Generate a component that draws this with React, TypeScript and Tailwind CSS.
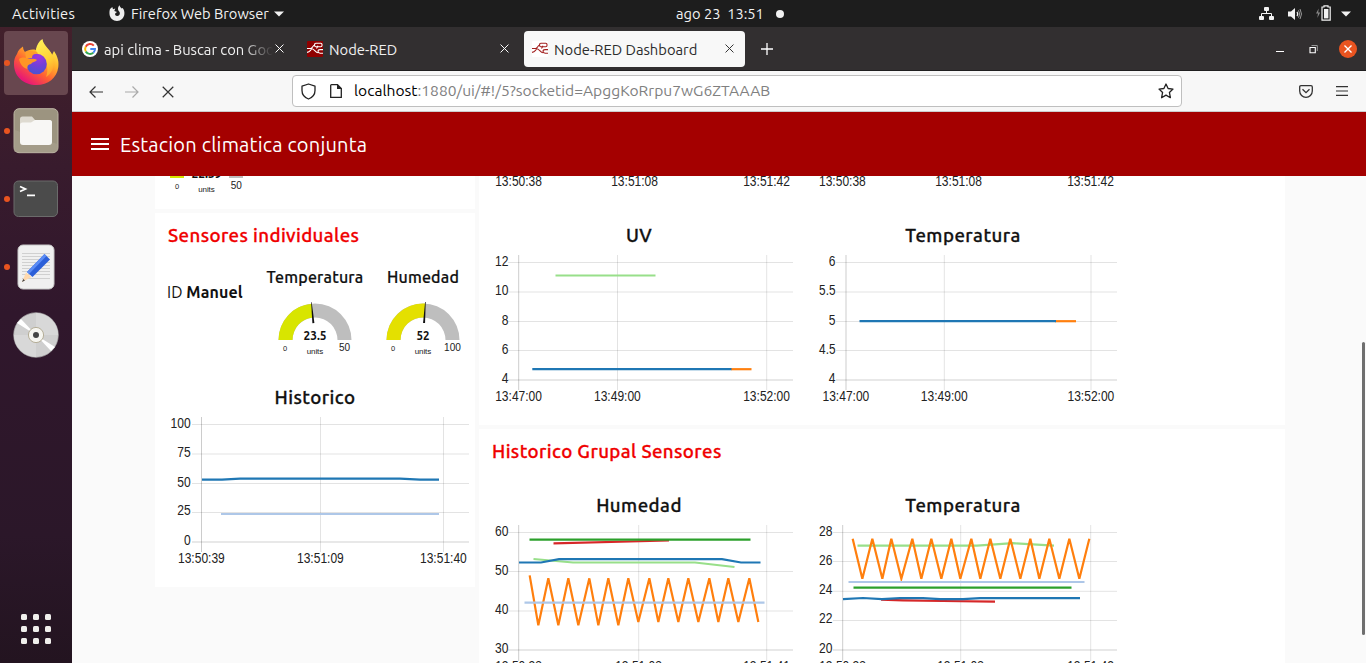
import React from 'react';

type Pt = [number, number];
type Series = { color: string; points: Pt[] };
type Tick = { at: number; label: string; base?: number };

const BLUE = '#1f77b4';
const LIGHT_BLUE = '#aec7e8';
const ORANGE = '#ff7f0e';
const LIGHT_GREEN = '#98df8a';
const GREEN = '#2ca02c';
const RED = '#d62728';

interface ChartProps {
  x: number;
  y: number;
  h: number;
  top?: number;
  bottom?: number;
  left?: number;
  labelRight?: number;
  xBase: number;
  yTicks: Tick[];
  xTicks: Tick[];
  series: Series[];
}

function Chart({ x, y, h, top = 0, bottom = 0, left = 0, labelRight = 0, xBase, yTicks, xTicks, series }: ChartProps) {
  return (
    <svg
      className="block w-[308px] shrink-0 [font-family:'Liberation_Sans',sans-serif] text-[14.2px]"
      height={h}
      viewBox={`${x} ${y} 308 ${h}`}
    >
      {yTicks.map((t, i) => (
        <g key={t.label}>
          <line x1={left} x2={x + 308} y1={t.at} y2={t.at} stroke="#000" strokeOpacity={i === yTicks.length - 1 ? 0.18 : 0.11} />
          <text x={labelRight} y={t.base} textAnchor="end" fill="#222" textLength={t.label.replace('.', '').length * 6.7 + (t.label.includes('.') ? 3 : 0)} lengthAdjust="spacingAndGlyphs">
            {t.label}
          </text>
        </g>
      ))}
      {xTicks.map((t, i) => (
        <g key={t.label}>
          {bottom > 0 && <line x1={t.at} x2={t.at} y1={top} y2={bottom} stroke="#000" strokeOpacity={i === 0 ? 0.2 : 0.11} />}
          <text x={t.at - 23.5} y={xBase} fill="#222" textLength={46.8} lengthAdjust="spacingAndGlyphs">
            {t.label}
          </text>
        </g>
      ))}
      {series.map((s, i) => (
        <polyline key={i} points={s.points.map((p) => p.join(',')).join(' ')} fill="none" stroke={s.color} strokeWidth={2.2} />
      ))}
    </svg>
  );
}

const zigzag = (ox: number, oy: number, xs: number[], ys: (i: number) => number): Pt[] =>
  xs.map((v, i) => [ox + v / 3, oy + ys(i) / 3] as Pt);

const humidityZig = zigzag(
  470, 420,
  [179, 205, 235, 265, 295, 325, 358, 385, 415, 445, 475, 505, 538, 565, 595, 625, 655, 685, 718, 745, 775, 805, 838, 865],
  (i) => (i === 0 ? 466 : i % 2 === 0 ? 475 : i < 10 ? 616 : 606),
);
const temperatureZig = zigzag(
  800, 420,
  [158, 187, 217, 247, 274, 304, 337, 364, 394, 424, 454, 481, 514, 541, 571, 601, 631, 661, 691, 718, 748, 778, 808, 838, 868],
  (i) => (i % 2 === 0 ? 356 : 476),
);

function ChartTitle({ children }: { children: React.ReactNode }) {
  return (
    <h3 className="flex h-[26px] w-[308px] shrink-0 items-center justify-center pt-[2px] text-[18.7px] font-medium tracking-[0.45px] text-[#111] [-webkit-text-stroke:0.3px_#111]">
      {children}
    </h3>
  );
}

function GroupTitle({ children }: { children: React.ReactNode }) {
  return (
    <h2 className="flex h-[44px] items-center whitespace-nowrap pl-[7px] pt-[2px] text-[18.7px] font-medium tracking-[0.4px] text-[#f00000] [-webkit-text-stroke:0.3px_#f00000]">
      {children}
    </h2>
  );
}

function Gauge({ value, max, fill, needle }: { value: string; max: string; fill: string; needle: number }) {
  const a = Math.PI * (1 - needle);
  const p = (r: number, off = 0) =>
    `${(40 + r * Math.cos(a) + off * Math.sin(a)).toFixed(2)} ${(38 - r * Math.sin(a) + off * Math.cos(a)).toFixed(2)}`;
  return (
    <svg width="84" height="56" viewBox="0 0 84 56" className="block shrink-0">
      <path d="M3.5 38A36.5 36.5 0 0 1 76.5 38H62.5A22.5 22.5 0 0 0 17.5 38Z" fill="#bebebe" />
      <path d={`M3.5 38A36.5 36.5 0 0 1 ${p(36.5)}L${p(22.5)}A22.5 22.5 0 0 0 17.5 38Z`} fill={fill} />
      <path d={`M${p(38, -0.3)}L${p(38, 0.3)}L${p(17, 1)}L${p(17, -1)}Z`} fill="#111" />
      <text x="40" y="38" textAnchor="middle" className="text-[12px] font-bold" fill="#111" textLength={value.length > 2 ? 23 : 13} lengthAdjust="spacingAndGlyphs">{value}</text>
      <g className="[font-family:'Liberation_Sans',sans-serif]" fill="#222">
        <text x="10" y="49" textAnchor="middle" className="text-[7.5px]">0</text>
        <text x="40" y="52" textAnchor="middle" className="text-[8px]" textLength="16.5">units</text>
        <text x="69.5" y="49" textAnchor="middle" className="text-[11px]" textLength={max.length * 5.6} lengthAdjust="spacingAndGlyphs">{max}</text>
      </g>
    </svg>
  );
}

function NodeRedIcon({ bg, fg }: { bg: string; fg: string }) {
  return (
    <svg width="16" height="16" viewBox="0 0 16 16" className="shrink-0">
      <rect width="16" height="16" rx="1" fill={bg} />
      <g fill="none" stroke={fg} strokeWidth="1.1">
        <path d="M0 7.500H3.500C6 7.500 5.500 4 8 4M1 7.500H3.800C8 7.500 8 11.700 11 11.700M0 11.400C3 11 3 9.500 4.800 7.900" />
        <rect x="7.600" y="2.300" width="7.400" height="3.500" rx="1.200" />
        <path d="M11 4.800 9.500 7.500M16 8.600H13.200Q11 8.600 11 10.300T13.200 12.200H16" />
      </g>
    </svg>
  );
}

function CloseX({ size = 9, color = '#fff', sw = 1.1 }: { size?: number; color?: string; sw?: number }) {
  return (
    <svg width={size} height={size} viewBox="0 0 10 10" className="shrink-0">
      <path d="M.6.6 9.4 9.4M9.4.6.6 9.4" stroke={color} strokeWidth={sw} fill="none" />
    </svg>
  );
}

function TopBar() {
  return (
    <header className="grid h-[27px] shrink-0 grid-cols-[676px_1fr_auto] items-center bg-[#1d1d1d] text-[14.67px] text-[#f2f2f2]">
      <div className="flex items-center pl-3">
        <span className="w-[97px] whitespace-nowrap tracking-[0.3px]">Activities</span>
        <svg width="16" height="17" viewBox="0 0 16 17" className="shrink-0">
          <path d="M1 4 3.3 2 4 4.2 6.3 3.4 5.3 6 8 7 6.4 8.2C5.5 9 6.4 11 8.2 11 10 11 11.2 9.5 10.8 7.8 10.5 6.4 9 5.8 9 4 9 2.4 9.6 1.3 10.5.3 10.8 2 12 2.6 12.6 3.6L13.6 3C15 4.7 15.6 6.5 15.4 9 15 13 12 16 8 16 4 16 .8 13 .5 9 .4 7 .5 5.5 1 4Z" fill="#ededed" />
        </svg>
        <span className="ml-[6px] w-[138px] whitespace-nowrap">Firefox Web Browser</span>
        <svg width="10" height="6" viewBox="0 0 10 6" className="ml-[5px]"><path d="M0 .5H10L5 5.5Z" fill="#f2f2f2" /></svg>
      </div>
      <div className="flex items-center">
        <span className="w-[88px] whitespace-pre">ago 23  13:51</span>
        <span className="ml-[12px] size-2 rounded-full bg-[#f2f2f2]" />
      </div>
      <div className="flex items-center pr-[15px]">
        <svg width="16" height="14" viewBox="0 0 16 14" fill="#f2f2f2">
          <rect x="5" y="0" width="5" height="4" rx="1" /><rect x="0" y="9" width="5" height="4" rx="1" /><rect x="10" y="9" width="5" height="4" rx="1" />
          <path d="M7.5 4V6.5M2.5 9V6.5H12.5V9" stroke="#f2f2f2" fill="none" />
        </svg>
        <svg width="16" height="14" viewBox="0 0 16 14" className="ml-[13px]">
          <path d="M0 4.5H3L7 1V13L3 9.5H0Z" fill="#f2f2f2" />
          <path d="M9 5Q10.5 7 9 9" stroke="#f2f2f2" strokeWidth="1.3" fill="none" /><path d="M10.5 3.3Q13 7 10.5 10.7M12 2Q15 7 12 12" stroke="#999" fill="none" />
        </svg>
        <svg width="16" height="16" viewBox="0 0 16 16" className="ml-[12px] -mt-px">
          <path d="M2.7 3.5 0 8.5H2L1.3 13 4.2 7.5H2.2Z" fill="#888" />
          <path d="M6 2H8V.8H12V2H14.2V15.2H6Z" fill="none" stroke="#f2f2f2" strokeWidth="1.2" /><rect x="8" y="4" width="4.4" height="9.4" fill="#f2f2f2" />
        </svg>
        <svg width="10" height="6" viewBox="0 0 10 6" className="ml-[9px]"><path d="M0 .5H10L5 5.5Z" fill="#f2f2f2" /></svg>
      </div>
    </header>
  );
}

function FirefoxLogo() {
  return (
    <svg width="48" height="48" viewBox="0 0 48 48">
      <defs>
        <linearGradient id="fxBody" x1=".85" y1=".1" x2=".25" y2=".95">
          <stop offset="0" stopColor="#fff44f" /><stop offset=".35" stopColor="#ffb02a" /><stop offset=".65" stopColor="#ff5e33" /><stop offset="1" stopColor="#e5127c" />
        </linearGradient>
        <linearGradient id="fxFlame" x1=".4" y1="0" x2=".7" y2="1">
          <stop offset="0" stopColor="#fff056" /><stop offset=".6" stopColor="#ffcf35" /><stop offset="1" stopColor="#ff9a2b" />
        </linearGradient>
        <radialGradient id="fxGlobe" cx=".6" cy=".15" r=".9">
          <stop offset="0" stopColor="#a236df" /><stop offset=".5" stopColor="#7240d8" /><stop offset="1" stopColor="#4455d0" />
        </radialGradient>
      </defs>
      <path d="M5 15C6 11 9 9 11 7.5 11 10 12 12 13 13 16 11 20 10 24 11L30 1C31 8 38 10 40 16L42 12C46 18 47 23 46.300 28 45 39 36 46 24.500 46 12 46 2.500 38 2 26 1.700 21 3 18 5 15Z" fill="url(#fxBody)" />
      <path d="M24 10C25 6 27 2 30.500 0 31 7 40 11 41.500 20 43 29 39 35 34 38 37 31 35 23 31 19 28 16 24 14 24 10Z" fill="url(#fxFlame)" />
      <circle cx="24.500" cy="25" r="10.300" fill="url(#fxGlobe)" />
      <path d="M7 20C11 17 15 19 17 19.500 20 20 23 19 25 21 23.500 23 20 23 19 25 16 25.500 15 27 15.500 30 11 29 8 25 7 20Z" fill="#ff9526" />
      <path d="M13 13C18 11 23 12 26 14 22 14 20 16 20 19L14 19Z" fill="#ff9d2b" />
    </svg>
  );
}

function DockItem({ active, running, children }: { active?: boolean; running?: boolean; children: React.ReactNode }) {
  return (
    <div className="flex h-16 w-[72px] items-center">
      <span className={`ml-1 size-[6px] -mr-[6px] rounded-full ${running ? 'z-10 bg-[#e95420]' : ''}`} />
      <div className={`flex size-16 items-center justify-center rounded-[4px] ${active ? 'bg-[#68474f]' : ''}`}>{children}</div>
    </div>
  );
}

function Dock() {
  return (
    <aside className="flex w-[72px] shrink-0 flex-col gap-1 bg-[linear-gradient(180deg,#42202b_0%,#381b2d_22%,#30172c_45%,#2b1729_80%,#231420_100%)] pt-1">
      <DockItem active running><FirefoxLogo /></DockItem>
      <DockItem running>
        <svg width="46" height="46" viewBox="0 0 46 46">
          <rect x="1" y=".7" width="44" height="44" rx="5" fill="#9c9480" stroke="#bdb6a4" />
          <path d="M1.500 44V22L44.500 36V40Q44.500 44 41 44Z" fill="#aaa28f" opacity=".6" />
          <path d="M7 11Q7 8.500 9.500 8.500H19L22 12H36Q39 12 39 15V22H7Z" fill="#dedad0" />
          <path d="M7 17Q7 14.500 9.500 14.500H18L22 12H36.500Q39 12 39 14.500V34Q39 37 36 37H10Q7 37 7 34Z" fill="#f8f7f5" />
        </svg>
      </DockItem>
      <DockItem running>
        <svg width="46" height="38" viewBox="0 0 46 38">
          <rect x="1" y="1" width="43.500" height="35.500" rx="4.500" fill="#4b4b4b" stroke="#6b6b6b" />
          <path d="M7 6.500 12.500 9 7 11.500M14 15.300H22" stroke="#fff" strokeWidth="1.700" fill="none" />
        </svg>
      </DockItem>
      <DockItem running>
        <svg width="38" height="46" viewBox="0 0 38 46">
          <rect x="1" y="1" width="36" height="44" rx="5" fill="#f0f0f0" stroke="#c8c8c8" />
          <path d="M5 9.500H33M5 12.500H33M5 15.500H33M5 18.500H33M5 21.500H33M5 24.500H33M5 27.500H33M5 30.500H33M5 34.500H33" stroke="#d0d0d0" />
          <path d="M5 38 9 28.500 14.500 33Z" fill="#ffd9ae" /><path d="M5 38 6.200 35 8 36.500Z" fill="#444" />
          <path d="M10 28 27.500 10 33 15.500 15.500 33Z" fill="#2b5fd9" /><path d="M10 28 27.500 10 29.500 12 12 30Z" fill="#5b8cf5" />
        </svg>
      </DockItem>
      <DockItem>
        <svg width="46" height="46" viewBox="0 0 46 46">
          <circle cx="23" cy="23" r="22.300" fill="#cfcfcf" stroke="#aaa" strokeWidth=".7" />
          <path d="M23 23V1A22 22 0 0 1 45 23ZM23 23V45A22 22 0 0 1 1 23Z" fill="#d8d8d8" />
          <path d="M23 23 4 11 8 7ZM23 23 42 35 38 39Z" fill="#fff" />
          <circle cx="23" cy="23" r="7.600" fill="#f6f5f0" stroke="#b5ae98" /><circle cx="23" cy="23" r="3" fill="#444" />
        </svg>
      </DockItem>
      <div className="mt-auto mb-[19px] ml-[21px] grid w-[30px] grid-cols-3 gap-[6px]">
        {Array.from({ length: 9 }, (_, i) => <span key={i} className="size-[6px] rounded-[1.5px] bg-[#f0efec]" />)}
      </div>
    </aside>
  );
}

function TabStrip() {
  return (
    <div className="flex h-[44px] shrink-0 items-center border-b border-[#1f1e1f] bg-[#322f30] text-[14.75px] text-[#f0f0f0]">
      <div className="flex h-9 w-[226px] items-center pl-[10px]">
        <svg width="16" height="16" viewBox="0 0 16 16" className="shrink-0">
          <circle cx="8" cy="8" r="8" fill="#fff" />
          <g fill="none" strokeWidth="2"><path d="M11.800 4.700A5 5 0 0 0 3.700 5.700" stroke="#ea4335" /><path d="M3.700 5.700A5 5 0 0 0 3.800 10.600" stroke="#fbbc05" /><path d="M3.800 10.600A5 5 0 0 0 11.300 11.700" stroke="#34a853" /><path d="M11.300 11.700A5 5 0 0 0 13 8H8.300" stroke="#4285f4" /></g>
        </svg>
        <span className="ml-[6px] w-[169px] overflow-hidden whitespace-nowrap pt-[3px] [mask-image:linear-gradient(90deg,#000_82%,transparent_100%)]">api clima - Buscar con Google</span>
        <span className="ml-[2px] flex"><CloseX /></span>
      </div>
      <div className="flex h-9 w-[226px] items-center pl-[9px] pr-[15px]">
        <NodeRedIcon bg="#8f0000" fg="#fff" />
        <span className="ml-[6px] flex-1 whitespace-nowrap pt-[3px]">Node-RED</span>
        <CloseX />
      </div>
      <div className="flex h-9 w-[221px] items-center rounded-[4px] bg-[#f8f8f8] pl-2 pr-[11px] text-[#2c2c2c]">
        <NodeRedIcon bg="#fff" fg="#a32020" />
        <span className="ml-[6px] flex-1 whitespace-nowrap pt-[3px]">Node-RED Dashboard</span>
        <CloseX color="#333" />
      </div>
      <svg width="12" height="12" viewBox="0 0 12 12" className="mt-px ml-4"><path d="M6 0V12M0 6H12" stroke="#fff" strokeWidth="1.300" /></svg>
      <div className="ml-auto flex items-center pr-[9px]">
        <span className="mt-[5px] h-px w-2 bg-white" />
        <svg width="9" height="9" viewBox="0 0 9 9" className="ml-[25px] mr-px mt-px"><path d="M1 2.500H6.300V7.800H1Z" stroke="#fff" strokeWidth="1.100" fill="none" /><path d="M2.500.5H8.300V6" stroke="#999" fill="none" /></svg>
        <span className="ml-5 flex size-[18px] items-center justify-center rounded-full bg-[#e95420]"><CloseX size={8} sw={1.7} /></span>
      </div>
    </div>
  );
}

function Toolbar() {
  return (
    <div className="flex h-[41px] shrink-0 items-center border-b border-[#ccc] bg-[#f7f7f7]">
      <div className="flex w-[220px] items-center pl-[17px] pt-px">
        <svg width="14" height="12" viewBox="0 0 14 12"><path d="M14 6H1M6.500.5 1 6 6.500 11.500" stroke="#333" strokeWidth="1.200" fill="none" /></svg>
        <svg width="14" height="12" viewBox="0 0 14 12" className="ml-[22px]"><path d="M0 6H13M7.500.5 13 6 7.500 11.500" stroke="#aaa" strokeWidth="1.200" fill="none" /></svg>
        <span className="ml-[23px] flex"><CloseX size={12} color="#333" sw={1} /></span>
      </div>
      <div className="flex h-8 w-[890px] items-center rounded-[4px] border border-[#bfbfbf] bg-white pl-2 pr-[7px] text-[15.6px]">
        <svg width="15" height="17" viewBox="0 0 15 17" className="shrink-0"><path d="M7.500 1 14 3.200V7.500C14 11 11.500 14.500 7.500 16 3.500 14.500 1 11 1 7.500V3.200Z" stroke="#222" strokeWidth="1.300" fill="none" strokeLinejoin="round" /></svg>
        <svg width="12" height="14" viewBox="0 0 12 14" className="ml-[14px] shrink-0"><path d="M.7 1.500Q.7.700 1.500.700H7.500L11.300 4.500V13.300H.7Z" stroke="#222" strokeWidth="1.300" fill="none" /><path d="M7 0V5H12Z" fill="#222" /></svg>
        <span className="ml-3 whitespace-nowrap text-[#808080]"><span className="text-black">localhost</span>:1880/ui/#!/5?socketid=ApggKoRrpu7wG6ZTAAAB</span>
        <svg width="16" height="16" viewBox="0 0 16 16" className="ml-auto"><path d="M8 1 10.100 5.500 15 6.100 11.400 9.400 12.400 14.700 8 12.100 3.600 14.700 4.600 9.400 1 6.100 5.900 5.500Z" stroke="#222" strokeWidth="1.300" fill="none" strokeLinejoin="round" /></svg>
      </div>
      <svg width="14" height="13" viewBox="0 0 14 13" className="ml-[117px]"><path d="M2 .7H12Q13.300.7 13.300 2V6A6.300 6.300 0 0 1 .7 6V2Q.7.700 2 .7ZM3.500 4.300 7 7.700 10.500 4.300" stroke="#333" strokeWidth="1.300" fill="none" /></svg>
      <svg width="12" height="10" viewBox="0 0 12 10" className="ml-[23px]"><path d="M0 .7H12M0 5H12M0 9.300H12" stroke="#333" strokeWidth="1.200" /></svg>
    </div>
  );
}

function Dashboard() {
  const seconds = (a: number, b: number, c: number): Tick[] => [{ at: a, label: '13:50:38' }, { at: b, label: '13:51:08' }, { at: c, label: '13:51:42' }];
  const minutes = (a: number, b: number, c: number): Tick[] => [{ at: a, label: '13:47:00' }, { at: b, label: '13:49:00' }, { at: c, label: '13:52:00' }];
  const rows = (labels: string[]): Tick[] =>
    labels.map((label, i) => ({ label, at: [262.5, 292, 321.5, 350.5, 380][i], base: [266, 295, 325, 353.5, 383][i] }));
  return (
    <main className="relative flex h-[487px] gap-1 overflow-hidden bg-[#fafafa] pl-[83px]">
      <div className="flex w-[320px] shrink-0 flex-col gap-1">
        <section className="h-[33px] bg-white">
          <svg width="320" height="33" viewBox="155 176 320 33" className="block">
            <rect x="170" y="176" width="14" height="2" fill="#d6e400" /><rect x="229" y="176" width="14" height="2" fill="#bebebe" />
            <text x="206.500" y="178" textAnchor="middle" className="text-[12px] font-bold" textLength="30" lengthAdjust="spacingAndGlyphs" fill="#111">22.39</text>
            <g className="[font-family:'Liberation_Sans',sans-serif]" fill="#222">
              <text x="177" y="189" textAnchor="middle" className="text-[7.5px]">0</text>
              <text x="206.500" y="192" textAnchor="middle" className="text-[8px]" textLength="16.5">units</text>
              <text x="236.300" y="189" textAnchor="middle" className="text-[11px]" textLength="11.2" lengthAdjust="spacingAndGlyphs">50</text>
            </g>
          </svg>
        </section>
        <section className="flex h-[374px] flex-col bg-white pl-[6px]">
          <GroupTitle>Sensores individuales</GroupTitle>
          <div className="flex h-[127px]">
            <p className="w-[100px] shrink-0 whitespace-nowrap pl-[6px] pt-[23px] text-[16px] tracking-[0.1px] text-[#111]">ID <b>Manuel</b></p>
            <div className="flex w-[108px] shrink-0 flex-col items-center pt-[8px]">
              <h4 className="flex h-6 items-center text-[16px] font-medium tracking-[0.2px] text-[#111] [-webkit-text-stroke:0.2px_#111]">Temperatura</h4>
              <div className="mt-[13px] ml-[3px]"><Gauge value="23.5" max="50" fill="#d8e500" needle={0.47} /></div>
            </div>
            <div className="flex w-[108px] shrink-0 flex-col items-center pt-[8px]">
              <h4 className="flex h-6 items-center text-[16px] font-medium tracking-[0.2px] text-[#111] [-webkit-text-stroke:0.2px_#111]">Humedad</h4>
              <div className="mt-[13px] ml-[3px]"><Gauge value="52" max="100" fill="#e4e000" needle={0.52} /></div>
            </div>
          </div>
          <ChartTitle>Historico</ChartTitle>
          <Chart
            x={161} y={410} h={177} top={417} bottom={552} left={192} labelRight={190.7} xBase={563}
            yTicks={[{ at: 424.5, label: '100', base: 427.5 }, { at: 454, label: '75', base: 457 }, { at: 483.5, label: '50', base: 486.5 }, { at: 512.5, label: '25', base: 515 }, { at: 542, label: '0', base: 545 }]}
            xTicks={[{ at: 201.5, label: '13:50:39' }, { at: 320.5, label: '13:51:09' }, { at: 443.5, label: '13:51:40' }]}
            series={[
              { color: LIGHT_BLUE, points: [[221, 514], [439, 514]] },
              { color: BLUE, points: [[202, 479.7], [222, 479.7], [240, 478.6], [400, 478.6], [420, 479.7], [439, 479.7]] },
            ]}
          />
        </section>
      </div>
      <div className="flex w-[806px] shrink-0 flex-col gap-1">
        <section className="h-[249px] bg-white pl-[6px]">
          <div className="flex gap-4">
            <Chart x={485} y={176} h={46} xBase={185.5} yTicks={[]} xTicks={seconds(518.7, 634.7, 766.7)} series={[]} />
            <Chart x={809} y={176} h={46} xBase={185.5} yTicks={[]} xTicks={seconds(842.5, 958.7, 1090.7)} series={[]} />
          </div>
          <div className="flex gap-4">
            <ChartTitle>UV</ChartTitle>
            <ChartTitle>Temperatura</ChartTitle>
          </div>
          <div className="flex gap-4">
            <Chart
              x={485} y={248} h={177} top={255} bottom={390} left={508} labelRight={508.5} xBase={401}
              yTicks={rows(['12', '10', '8', '6', '4'])} xTicks={minutes(518.7, 617.5, 766.7)}
              series={[
                { color: LIGHT_GREEN, points: [[555.5, 275.5], [655.5, 275.5]] },
                { color: ORANGE, points: [[731, 369.2], [751.5, 369.2]] },
                { color: BLUE, points: [[532.3, 369.2], [731.5, 369.2]] },
              ]}
            />
            <Chart
              x={809} y={248} h={177} top={255} bottom={390} left={836} labelRight={835.5} xBase={401}
              yTicks={rows(['6', '5.5', '5', '4.5', '4'])} xTicks={minutes(846, 944.3, 1091)}
              series={[
                { color: ORANGE, points: [[1055, 321.2], [1076, 321.2]] },
                { color: BLUE, points: [[859.5, 321.2], [1056, 321.2]] },
              ]}
            />
          </div>
        </section>
        <section className="h-[234px] bg-white pl-[6px]">
          <GroupTitle>Historico Grupal Sensores</GroupTitle>
          <div className="flex gap-4 pt-[19px]">
            <ChartTitle>Humedad</ChartTitle>
            <ChartTitle>Temperatura</ChartTitle>
          </div>
          <div className="flex gap-4">
            <Chart
              x={485} y={518} h={145} top={525} bottom={661} left={508} labelRight={508.5} xBase={670.5}
              yTicks={[{ at: 532.5, label: '60', base: 535.5 }, { at: 571.5, label: '50', base: 574.5 }, { at: 611, label: '40', base: 614 }, { at: 650, label: '30', base: 653 }]}
              xTicks={[{ at: 518.7, label: '13:50:38' }, { at: 638.7, label: '13:51:08' }, { at: 766.7, label: '13:51:41' }]}
              series={[
                { color: RED, points: [[553.5, 543.3], [669, 540.5]] },
                { color: GREEN, points: [[529.5, 539.7], [750.5, 539.7]] },
                { color: LIGHT_GREEN, points: [[533.5, 559], [573, 562.5], [695, 562.5], [734.5, 567]] },
                { color: ORANGE, points: humidityZig },
                { color: LIGHT_BLUE, points: [[524.5, 602.7], [764.5, 602.7]] },
                { color: BLUE, points: [[519, 562.5], [541, 562.5], [559, 559.2], [722, 559.2], [741, 562.5], [760.5, 562.5]] },
              ]}
            />
            <Chart
              x={809} y={518} h={145} top={525} bottom={661} left={833} labelRight={832.5} xBase={670.5}
              yTicks={[{ at: 532.5, label: '28', base: 535.5 }, { at: 561.5, label: '26', base: 564.5 }, { at: 591.3, label: '24', base: 594 }, { at: 620.5, label: '22', base: 623 }, { at: 650, label: '20', base: 653 }]}
              xTicks={[{ at: 842.7, label: '13:50:38' }, { at: 960.7, label: '13:51:08' }, { at: 1090.7, label: '13:51:42' }]}
              series={[
                { color: RED, points: [[881, 599.7], [903, 600.3], [943, 601], [995, 601.7]] },
                { color: GREEN, points: [[853.5, 587.7], [1071.5, 587.7]] },
                { color: LIGHT_GREEN, points: [[857.5, 545.6], [977, 545.6], [1013, 543.2], [1054, 545.6]] },
                { color: ORANGE, points: temperatureZig },
                { color: LIGHT_BLUE, points: [[848.5, 582], [1084.5, 582]] },
                { color: BLUE, points: [[843, 599.2], [863, 598], [882, 599.2], [900, 598.1], [923, 598.1], [940, 599.1], [963, 599.1], [980, 598.1], [1080, 598.1]] },
              ]}
            />
          </div>
        </section>
      </div>
      <div className="absolute right-px top-[166px] h-[293px] w-[3px] rounded-full bg-[#6f6f6f]" />
    </main>
  );
}

export default function App() {
  return (
    <div className="flex h-[663px] w-[1366px] flex-col overflow-hidden bg-[#fafafa] [font-family:Ubuntu,'Noto_Sans',sans-serif]">
      <TopBar />
      <div className="flex min-h-0 flex-1">
        <Dock />
        <div className="flex min-w-0 flex-1 flex-col">
          <TabStrip />
          <Toolbar />
          <div className="flex h-16 shrink-0 items-center bg-[#a40000] pl-[19px] text-white">
            <svg width="18" height="12" viewBox="0 0 18 12"><path d="M0 1H18M0 6H18M0 11H18" stroke="#fff" strokeWidth="2" /></svg>
            <h1 className="ml-[11px] whitespace-nowrap pt-[2px] text-[20px] tracking-[0.2px]">Estacion climatica conjunta</h1>
          </div>
          <Dashboard />
        </div>
      </div>
    </div>
  );
}
